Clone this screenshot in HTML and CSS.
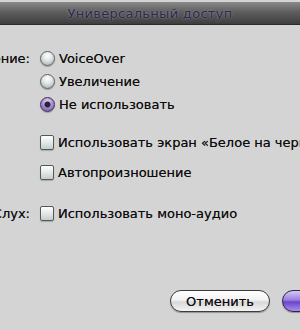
FILE: index.html
```html
<!DOCTYPE html>
<html lang="ru">
<head>
<meta charset="utf-8">
<title>Универсальный доступ</title>
<link rel="stylesheet" href="styles.css">
</head>
<body>
<div class="window">
  <div class="titlebar"><span class="title">Универсальный доступ</span></div>
  <div class="content">
    <div class="group group-seeing">
      <div class="label">Зрение:</div>
      <div class="options">
        <div class="row"><span class="radio"></span><span>VoiceOver</span></div>
        <div class="row"><span class="radio"></span><span>Увеличение</span></div>
        <div class="row"><span class="radio radio-on"></span><span>Не использовать</span></div>
      </div>
    </div>
    <div class="group group-extra">
      <div class="label"></div>
      <div class="options options-wide">
        <div class="row"><span class="check"></span><span>Использовать экран «Белое на черном»</span></div>
        <div class="row"><span class="check"></span><span>Автопроизношение</span></div>
      </div>
    </div>
    <div class="group group-hearing">
      <div class="label">Слух:</div>
      <div class="options">
        <div class="row"><span class="check"></span><span>Использовать моно-аудио</span></div>
      </div>
    </div>
    <div class="buttons">
      <button class="btn btn-cancel">Отменить</button>
      <button class="btn btn-default">Продолжить</button>
    </div>
  </div>
</div>
</body>
</html>
```
FILE: styles.css
```css
html, body {
  margin: 0;
  padding: 0;
  width: 300px;
  height: 330px;
  overflow: hidden;
  background: #d4d4d4;
}
.window {
  font-family: "DejaVu Sans", "Liberation Sans", sans-serif;
  font-size: 13px;
  color: #0c0c0c;
  text-shadow: 0 0 0.6px rgba(0,0,0,0.6);
}
.titlebar {
  margin-top: 2px;
  height: 22px;
  background: linear-gradient(#8a8a8a 0%, #5e5e5e 45%, #3e3e3e 100%);
  border-bottom: 1px solid #2a2a2a;
  display: flex;
  align-items: center;
  justify-content: center;
}
.title {
  color: #2c2a44;
  font-size: 13px;
  letter-spacing: 0.3px;
  text-shadow: 0 0 2px #9a96b0;
}
.content {
  padding-top: 22px;
}
.group {
  display: grid;
  grid-template-columns: 30px 1fr;
  column-gap: 10px;
}
.label {
  display: flex;
  justify-content: flex-end;
  white-space: nowrap;
  height: 23px;
  align-items: center;
}
.options {
  display: flex;
  flex-direction: column;
}
.row {
  height: 23px;
  display: flex;
  align-items: center;
  gap: 4px;
  white-space: nowrap;
}
.options-wide .row {
  height: 30px;
}
.group-extra {
  margin-top: 11px;
}
.group-hearing {
  margin-top: 15px;
}
.radio {
  flex: none;
  width: 13px;
  height: 13px;
  border-radius: 50%;
  border: 1px solid #5a6464;
  background: radial-gradient(circle at 50% 30%, #ffffff 0%, #e2e6e6 40%, #9ea8a8 100%);
  box-shadow: 0 1px 1px rgba(0,0,0,0.25);
}
.radio-on {
  border-color: #3a3450;
  background:
    radial-gradient(circle at 50% 50%, #2a2236 0 2.5px, transparent 3.5px),
    radial-gradient(circle at 50% 30%, #e6dcf6 0%, #a48ad0 50%, #6a54a0 100%);
}
.check {
  flex: none;
  width: 12px;
  height: 13px;
  border-radius: 2px;
  border: 1px solid #505a5a;
  background: linear-gradient(#ffffff 0%, #e4e8e8 50%, #c4cccc 100%);
  box-shadow: 0 1px 1px rgba(0,0,0,0.2);
}
.buttons {
  display: flex;
  gap: 12px;
  margin-top: 65px;
  padding-left: 170px;
}
.btn {
  flex: none;
  width: 100px;
  height: 22px;
  border-radius: 11px;
  font-family: "DejaVu Sans", "Liberation Sans", sans-serif;
  font-size: 13px;
  color: #0c0c0c;
  text-shadow: 0 0 0.6px rgba(0,0,0,0.6);
  padding: 0;
  border: 1px solid #3c3c3c;
  box-shadow: 0 1px 1px rgba(0,0,0,0.3);
}
.btn-cancel {
  background: linear-gradient(#ffffff 0%, #f2f2f2 45%, #d8d8d8 55%, #f4f4f4 100%);
}
.btn-default {
  color: transparent;
  text-shadow: none;
  border-color: #2e2450;
  background: linear-gradient(#d6c8f4 0%, #9a7ee0 45%, #6a44c8 55%, #a890ec 100%);
}
```
